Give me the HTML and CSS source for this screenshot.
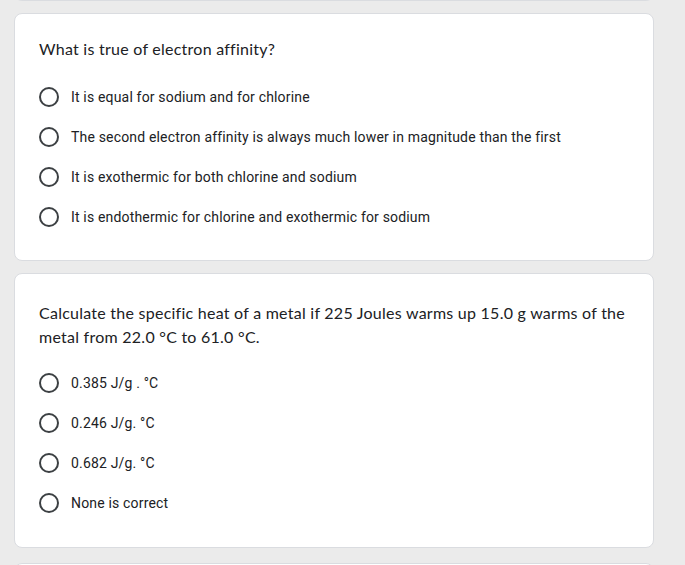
FILE: index.html
```html
<!DOCTYPE html>
<html>
<head>
<meta charset="utf-8">
<link rel="stylesheet" href="styles.css">
</head>
<body>
<div class="page">
  <div class="card card-prev"></div>
  <div class="card">
    <div class="question">What is true of electron affinity?</div>
    <div class="options">
      <div class="option"><span class="radio"></span><span class="label">It is equal for sodium and for chlorine</span></div>
      <div class="option"><span class="radio"></span><span class="label">The second electron affinity is always much lower in magnitude than the first</span></div>
      <div class="option"><span class="radio"></span><span class="label">It is exothermic for both chlorine and sodium</span></div>
      <div class="option"><span class="radio"></span><span class="label">It is endothermic for chlorine and exothermic for sodium</span></div>
    </div>
  </div>
  <div class="card card-long">
    <div class="question">Calculate the specific heat of a metal if 225 Joules warms up 15.0 g warms of the metal from 22.0 °C to 61.0 °C.</div>
    <div class="options">
      <div class="option"><span class="radio"></span><span class="label">0.385 J/g . °C</span></div>
      <div class="option"><span class="radio"></span><span class="label">0.246 J/g. °C</span></div>
      <div class="option"><span class="radio"></span><span class="label">0.682 J/g. °C</span></div>
      <div class="option"><span class="radio"></span><span class="label">None is correct</span></div>
    </div>
  </div>
  <div class="card card-next"></div>
</div>
</body>
</html>
```
FILE: styles.css
```css
html, body {
  margin: 0;
  padding: 0;
  background: #ebebeb;
  height: 100%;
  overflow: hidden;
}
.page {
  width: 640px;
  margin-left: 14px;
  display: flex;
  flex-direction: column;
  gap: 12px;
}
.card {
  background: #fff;
  border: 1px solid #dadce0;
  border-radius: 8px;
  padding: 23px 24px 23px;
}
.card-long {
  padding-top: 27px;
  padding-bottom: 24px;
}
.card-long .options {
  margin-top: 14px;
}
.card-prev {
  height: 0;
  padding: 10px 0 0;
  margin-top: -10px;
  border-top: none;
  border-radius: 0 0 8px 8px;
}
.card-next {
  height: 40px;
  margin-top: 3px;
}
.question {
  font-family: "Lato", "Roboto", sans-serif;
  font-size: 16px;
  line-height: 24px;
  color: #202124;
  letter-spacing: 0.25px;
}
.options {
  margin-top: 16px;
  display: flex;
  flex-direction: column;
}
.option {
  height: 40px;
  display: flex;
  align-items: center;
}
.radio {
  width: 20px;
  height: 20px;
  box-sizing: border-box;
  border: 2px solid #3c4043;
  border-radius: 50%;
  flex: none;
}
.label {
  padding-left: 12px;
  font-family: "Roboto", sans-serif;
  font-size: 14px;
  color: #202124;
  letter-spacing: 0.17px;
}
```
